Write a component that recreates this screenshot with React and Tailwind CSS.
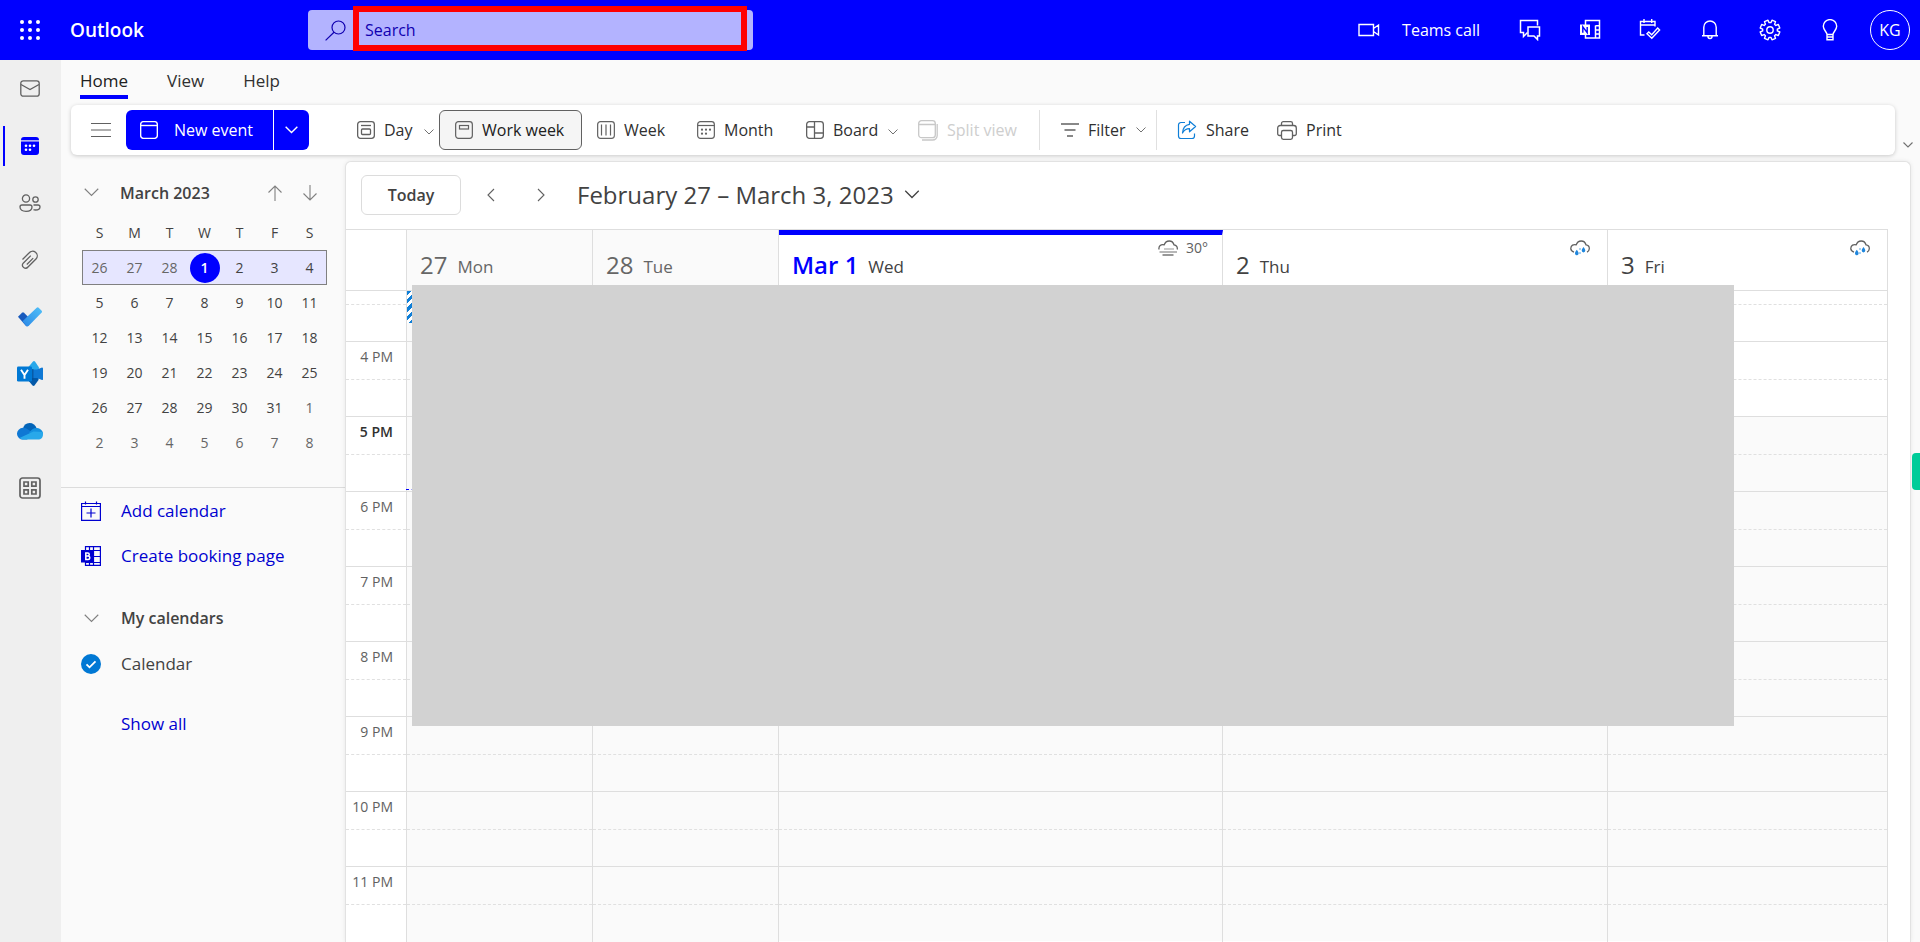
import React from 'react';

function Svg({ size = 20, children, className = '', w, h, sw = 1.1, vb }) {
  return (
    <svg
      width={w || size}
      height={h || size}
      viewBox={vb || `0 0 ${w || size} ${h || size}`}
      fill="none"
      stroke="currentColor"
      strokeWidth={sw}
      className={`shrink-0 ${className}`}
      aria-hidden="true"
    >
      {children}
    </svg>
  );
}

const Chevron = ({ w = 10, h = 6, sw = 1.1, className }) => (
  <Svg w={w} h={h} vb="0 0 10 6" sw={sw} className={className}>
    <path d="M.5.5 5 5 9.5.5" vectorEffect="non-scaling-stroke" />
  </Svg>
);

const Waffle = () => (
  <Svg size={20}>
    {[2, 10, 18].map((y) =>
      [2, 10, 18].map((x) => <circle key={`${x}-${y}`} cx={x} cy={y} r="2" fill="currentColor" stroke="none" />)
    )}
  </Svg>
);

const SearchIcon = () => (
  <Svg size={21} sw={1.2}>
    <circle cx="13.5" cy="7.5" r="6.5" />
    <path d="M9 12.2.6 20.4" />
  </Svg>
);

const Video = () => (
  <Svg w={22} h={14} sw={1.4}>
    <path d="M1 1.5h14.5v11H1zM15.5 5.5l5-3.5v10l-5-3.5" />
  </Svg>
);

const ChatIcon = () => (
  <Svg size={22} sw={1.5}>
    <path d="M18.5 6.5v-5H1.500v12h3v4l4-4" />
    <path d="M9 8h11.500v9H18.500v3.500L15 17H9z" />
  </Svg>
);

const OneNote = () => (
  <Svg size={22} sw={1.5}>
    <path d="M6.500 6V1.500h14v17.500h-14V16M16.500 6.500v12.500M16.500 6.800h4M16.500 11h4M16.500 15h4" />
    <path d="M1 5.500h10v10.500H1z" fill="currentColor" stroke="none" />
    <path d="M3.800 13.700V7.900l4.400 5.800V7.900" stroke="#0000ff" strokeWidth="1.400" />
  </Svg>
);

const CalCheck = () => (
  <Svg size={22} sw={1.4}>
    <path d="M5.500 16H1.500V2.500h14.500v5M1.500 6h14.500M5 0v4M12.700 0v4" />
    <path d="m8 14.800 1.800-1.800 2.900 2.700 6-6.700 1.900 1.900-7.800 8.400z" />
  </Svg>
);

const Bell = () => (
  <Svg size={22} sw={1.4}>
    <path d="M4.800 16.500V8.200a6.200 6.200 0 0 1 12.400 0v8.300M3 16.700h16M9 17.500a2 2 0 0 0 4 0" />
  </Svg>
);

const Gear = () => {
  const pts = [];
  for (let i = 0; i < 8; i += 1) {
    const a = (i * Math.PI) / 4 + Math.PI / 8;
    [[-0.27, 7.4], [-0.19, 10], [0.19, 10], [0.27, 7.4]].forEach(([d, r]) => {
      pts.push(`${(11 + r * Math.sin(a + d)).toFixed(2)},${(11 - r * Math.cos(a + d)).toFixed(2)}`);
    });
  }
  return (
    <Svg size={22} sw={1.4}>
      <polygon points={pts.join(' ')} strokeLinejoin="round" />
      <circle cx="11" cy="11" r="3.200" />
    </Svg>
  );
};

const Bulb = () => (
  <Svg size={22} sw={1.4}>
    <path d="M8 15.500c0-2.500-3.700-4.500-3.700-8.200a6.700 6.700 0 0 1 13.400 0c0 3.700-3.700 5.700-3.700 8.200zM8 15.500v5.300h6v-5.300M8 18h6" />
  </Svg>
);

const Mail = () => (
  <Svg w={20} h={17} sw={1.3}>
    <rect x=".8" y=".8" width="18.400" height="15.400" rx="2.500" />
    <path d="M1 4.500 10 9.500l9-5" />
  </Svg>
);

const CalendarFilled = () => (
  <Svg size={18} sw={0}>
    <path d="M0 3a3 3 0 0 1 3-3h12a3 3 0 0 1 3 3v.2H0zM0 4.600h18V15a3 3 0 0 1-3 3H3a3 3 0 0 1-3-3z" fill="currentColor" />
    <g fill="#fff">
      {[5, 9, 13].map((x) => <circle key={x} cx={x} cy="8.800" r="1.300" />)}
      {[5, 9].map((x) => <circle key={x} cx={x} cy="12.800" r="1.300" />)}
    </g>
  </Svg>
);

const People = () => (
  <Svg w={22} h={18} sw={1.3}>
    <circle cx="7" cy="4.500" r="3.600" />
    <circle cx="16.500" cy="5.500" r="2.700" />
    <path d="M3 11h8a2 2 0 0 1 2 2c0 3-2.500 4.300-6 4.300S1 16 1 13a2 2 0 0 1 2-2z" />
    <path d="M14.500 11h4.500a2 2 0 0 1 2 2c0 2-2 3-4.500 3-1 0-1.500-.100-2-.300" />
  </Svg>
);

const Clip = () => (
  <Svg w={18} h={20} sw={1.3}>
    <path d="M1.500 9.500 8 3a4.600 4.600 0 0 1 7.200 5.800L7 17a3 3 0 0 1-4.800-3.800L9.800 5.600M5.800 14.500l6.400-6.400" />
  </Svg>
);

const Todo = () => (
  <Svg w={24} h={20} sw={0}>
    <defs>
      <linearGradient id="todo" x1="0" y1="1" x2="1" y2="0">
        <stop offset="0" stopColor="#2b88e6" />
        <stop offset="1" stopColor="#50c0f8" />
      </linearGradient>
    </defs>
    <path d="m0 9.700 4-4q1-.7 2 0l8 8-4 5.300q-1 .7-2 0z" fill="#185abd" />
    <path d="M4.500 14.200 18.700.700q1-.7 2 0l3 3q.6 1 0 1.800L10.500 19q-1.300.7-2.300 0z" fill="url(#todo)" />
  </Svg>
);

const Viva = () => (
  <Svg w={26} h={26} sw={0}>
    <path d="M11 6.500 16 .500q1-.8 2 0l4 6-1 7H11z" fill="#28a8ea" />
    <path d="M12 13h10l-.5 6-4 5.500q-1 .8-2 0L11 19z" fill="#0358a7" />
    <path d="M14 8.500h6l5-2q1 .2 1 1v11q-.5.7-1 .5l-5-2h-6z" fill="#0f78d4" />
    <path d="M12 8h4.500v10.500L12 21z" fill="#064f94" opacity=".7" />
    <rect x="0" y="5.500" width="15" height="15" rx="1.200" fill="#0078d4" />
    <path d="M4 8.800 7.500 14 11 8.800M7.500 13.500v4.200" stroke="#fff" strokeWidth="1.900" />
  </Svg>
);

const OneDrive = () => (
  <Svg w={26} h={18} sw={0}>
    <path d="M6 6.500A7 7 0 0 1 12.500 1c3.500 0 6 2 7 5l-5 6z" fill="#0364b8" />
    <path d="M6 17.500A5.800 5.800 0 0 1 0 12a6 6 0 0 1 6-6.200c2-.1 3.500.7 5 1.700l7 4.500-8 5.500z" fill="#0f78d4" />
    <path d="M12 11c2-3.500 5-5.300 8-5 4 .5 6 3.200 6 6l-9 2z" fill="#1490df" />
    <path d="M2.500 16c1 .9 2 1.500 3.500 1.500h15c3 0 5-2 5-5 0-1-.2-1.800-.6-2.500L16.500 9.500z" fill="#28a8ea" />
  </Svg>
);

const Apps = () => (
  <Svg size={22} sw={1.7}>
    <rect x="1" y="1" width="20" height="20" rx="2.500" />
    <path d="M5 5h4.200v4.200H5zM12.800 5H17v4.200h-4.200zM5 12.800h4.200V17H5zM12.800 12.800H17V17h-4.200z" />
  </Svg>
);

const Frame = () => <rect x=".65" y=".65" width="16.700" height="16.700" rx="2.800" />;

const EventIcon = () => <Svg size={18} sw={1.4}><Frame /><path d="M.7 4.500h16.600" /></Svg>;
const DayIcon = () => <Svg size={18} sw={1.3}><Frame /><path d="M4 4.500h10" /><rect x="4.500" y="8" width="9" height="5.500" rx="1" /></Svg>;
const WorkWeekIcon = () => <Svg size={18} sw={1.2}><Frame /><rect x="4.500" y="4.500" width="9" height="3.500" /></Svg>;
const WeekIcon = () => <Svg size={18} sw={1.2}><Frame /><path d="M4.500 3.500v11M9 3.500v11M13.500 3.500v11" /></Svg>;
const MonthIcon = () => (
  <Svg size={18} sw={1.2}>
    <Frame />
    <path d="M.7 4.500h16.600" />
    <g fill="currentColor" stroke="none">
      {[5, 9, 13].map((x) => <circle key={x} cx={x} cy="8.700" r="1.100" />)}
      {[5, 9].map((x) => <circle key={x} cx={x} cy="12.700" r="1.100" />)}
    </g>
  </Svg>
);
const BoardIcon = () => <Svg size={18} sw={1.3}><Frame /><path d="M8.500.7v16.600M.7 6h7.800M8.500 12h8.800" /></Svg>;
const SplitIcon = () => (
  <Svg w={20} h={21} sw={1.3}>
    <rect x=".7" y=".7" width="16.600" height="17" rx="2.800" />
    <path d="M.7 4.500h16.600M19.200 4v11.500a4.500 4.500 0 0 1-4.500 4.500H4" />
  </Svg>
);
const FilterIcon = () => <Svg w={18} h={14} sw={1.3}><path d="M0 1h18M3.500 7h11M6 13h6" /></Svg>;
const ShareIcon = () => (
  <Svg size={20} sw={1.2}>
    <path d="M8 2.500H4A2.500 2.500 0 0 0 1.500 5v11A2.500 2.500 0 0 0 4 18.500h11a2.500 2.500 0 0 0 2.500-2.500v-2.500" />
    <path d="M12.500 1.200 18.600 6.500l-6.100 5.300V8.600c-3.500 0-5.500 1.400-7 4.400.3-4.800 2.600-8.200 7-8.700z" strokeLinejoin="round" />
  </Svg>
);
const PrintIcon = () => (
  <Svg w={20} h={19} sw={1.3}>
    <path d="M4.500 4.500V2.500A1.800 1.800 0 0 1 6.300.7h7.400a1.800 1.800 0 0 1 1.800 1.800v2M4.500 14.500h-2A1.800 1.800 0 0 1 .7 12.700V7a2.500 2.500 0 0 1 2.500-2.500h13.600A2.500 2.500 0 0 1 19.300 7v5.700a1.800 1.800 0 0 1-1.800 1.800h-2" />
    <rect x="4.500" y="9.500" width="11" height="8.800" rx="1.800" />
  </Svg>
);
const AddCal = () => (
  <Svg size={20} sw={1.2}>
    <path d="M.6 2.500h18.800v16.900H.6zM.6 5.500h18.800M4.500.5v3M15.500.5v3M10 7.500v9M5.500 12h9" />
  </Svg>
);
const Booking = () => (
  <Svg size={20} sw={1.2}>
    <path d="M4.500.6h14.900v18.800H4.500zM8.500.6v4M12.500.6v18.800M8.500 15.500v4M4.500 4.500h14.900M12 10.500h7.400M4.500 16.500h14.900" />
    <path d="M0 4h12.500v12.500H0z" fill="currentColor" stroke="none" />
    <path d="M4.800 6.900h1.900a1.500 1.500 0 0 1 0 3.100H4.800h2.200a1.700 1.700 0 0 1 0 3.500H4.800z" stroke="#fff" strokeWidth="1.500" />
  </Svg>
);
const CheckCircle = () => (
  <Svg size={20} sw={1.8}>
    <circle cx="10" cy="10" r="10" fill="#0078d4" stroke="none" />
    <path d="m5.500 10.300 3 3 6-6" stroke="#fff" />
  </Svg>
);
const Arrow = ({ down }) => (
  <Svg w={14} h={16} sw={1.1}>
    {down ? <path d="M7 0v15M.5 8.500 7 15l6.500-6.500" /> : <path d="M7 16V1M.5 7.500 7 1l6.500 6.500" />}
  </Svg>
);
const SideChevron = ({ left }) => (
  <Svg w={8} h={14} sw={1.1}>{left ? <path d="M7 1 1 7l6 6" /> : <path d="m1 1 6 6-6 6" />}</Svg>
);

const FogCloud = () => (
  <Svg w={20} h={16} sw={1.3}>
    <path d="M1 9.500C.4 6 3 4 6.200 4.800 8-.3 14.500-.3 16 4.800c2.500.3 3.700 2.200 3.200 4.700" />
    <path d="M6 9h10" opacity=".5" />
    <path d="M1.500 12h17.500" opacity=".7" />
    <path d="M4.500 15h11" />
  </Svg>
);
const RainCloud = () => (
  <Svg w={20} h={16} sw={1.3}>
    <path d="M4 12.200C1.800 11.500.7 10 .8 8.300 1 5.300 3.500 4 6.200 4.800 8-.3 14.500-.3 16 4.800c2.300.3 3.400 2 3.300 4-.1 1.700-.9 2.800-2.300 3.400" />
    <g fill="#1f86dc" stroke="none">
      <path d="M6.800 9.800c1.100 1.700 1.800 2.400 1.800 3.600a1.800 1.800 0 0 1-3.600 0c0-1.200.7-1.900 1.800-3.600zM13.500 7c1.100 1.700 1.800 2.400 1.800 3.600a1.800 1.800 0 0 1-3.600 0c0-1.200.7-1.900 1.800-3.600z" />
      <circle cx="10" cy="9" r="1" opacity=".5" />
      <circle cx="10" cy="13" r="1" opacity=".5" />
    </g>
  </Svg>
);

const headerIcons = [
  ['Chat', ChatIcon],
  ['OneNote feed', OneNote],
  ['My day', CalCheck],
  ['Notifications', Bell],
  ['Settings', Gear],
  ['Tips', Bulb],
];

function Header() {
  return (
    <header className="flex h-[60px] shrink-0 items-center bg-[#0000ff] text-white">
      <button className="flex w-[60px] justify-center" aria-label="App launcher"><Waffle /></button>
      <div className="w-[248px] pl-[10px] text-[19px] font-semibold">Outlook</div>
      <label className="relative flex h-10 w-[445px] items-center rounded bg-[#b3b3ff] pl-[17px] text-[#1000b0]">
        <SearchIcon />
        <input
          aria-label="Search"
          placeholder="Search"
          className="ml-[19px] min-w-0 flex-1 bg-transparent text-base outline-none placeholder:text-[#1000b0]"
        />
        <span className="pointer-events-none absolute -top-1 right-[6px] -bottom-px left-[45px] border-[6px] border-[#ff0000]" />
      </label>
      <div className="ml-auto flex items-center pr-[10px]">
        <button className="mr-5 flex items-center gap-[22px] whitespace-nowrap"><Video />Teams call</button>
        {headerIcons.map(([name, Icon]) => (
          <button key={name} aria-label={name} className="flex h-10 w-[60px] items-center justify-center"><Icon /></button>
        ))}
        <button className="ml-[10px] flex size-10 items-center justify-center rounded-full border border-white text-base" aria-label="Account">KG</button>
      </div>
    </header>
  );
}

const railItems = [
  ['Mail', Mail],
  ['Calendar', CalendarFilled],
  ['People', People],
  ['Files', Clip],
  ['To Do', Todo],
  ['Viva Engage', Viva],
  ['OneDrive', OneDrive],
  ['More apps', Apps],
];

function Rail() {
  return (
    <nav className="flex w-[61px] shrink-0 flex-col bg-[#efefef] text-[#616161]">
      {railItems.map(([name, Icon]) => (
        <button
          key={name}
          aria-label={name}
          className={`relative flex h-[57px] w-[60px] items-center justify-center ${name === 'Calendar' ? 'text-[#0000ff]' : ''}`}
        >
          {name === 'Calendar' && <span className="absolute left-[3px] h-10 w-[2px] bg-[#0000ff]" />}
          <Icon />
        </button>
      ))}
    </nav>
  );
}

const toolClass = 'flex h-10 items-center gap-[9px] whitespace-nowrap [&>svg]:text-[#616161] disabled:[&>svg]:text-[#c8c8c8]';

function Toolbar() {
  return (
    <div className="flex">
      <div className="ml-[10px] flex h-[50px] flex-1 items-center rounded-md bg-white pl-5 text-[#303030] shadow-[0_1px_4px_rgba(0,0,0,0.2)]">
        <button aria-label="Toggle navigation" className="mr-[15px] text-[#616161]">
          <Svg w={20} h={16} sw={1.2}><path d="M0 1.500h20M0 8h20M0 14.500h20" /></Svg>
        </button>
        <div className="mr-12 flex gap-px text-white">
          <button className="flex h-10 w-[147px] items-center gap-4 rounded-l-md bg-[#0000ff] pl-[14px] font-medium whitespace-nowrap"><EventIcon />New event</button>
          <button aria-label="More new options" className="flex w-[35px] items-center justify-center rounded-r-md bg-[#0000ff]"><Chevron w={13} h={8} sw={1.4} /></button>
        </div>
        <button className={`${toolClass} w-[82px]`}><DayIcon />Day<Chevron sw={0.9} className="mt-1 ml-auto mr-[5px]" /></button>
        <button className={`${toolClass} w-[143px] rounded-md border border-[#616161] bg-[#f5f5f5] pl-[15px] text-[#202020]`}><WorkWeekIcon />Work week</button>
        <button className={`${toolClass} ml-[15px] w-[100px]`}><WeekIcon />Week</button>
        <button className={`${toolClass} w-[109px]`}><MonthIcon />Month</button>
        <button className={`${toolClass} w-[112px]`}><BoardIcon />Board<Chevron sw={0.9} className="mt-1 ml-auto mr-5" /></button>
        <button disabled className={`${toolClass} w-[122px] border-r border-[#e0e0e0] text-[#cecece]`}><SplitIcon />Split view</button>
        <button className={`${toolClass} w-[117px] border-r border-[#e0e0e0] pl-[21px]`}><FilterIcon />Filter<Chevron sw={0.9} className="ml-auto mr-[10px]" /></button>
        <button className={`${toolClass} ml-5 w-[100px]`}><span className="text-[#0f7fd8]"><ShareIcon /></span>Share</button>
        <button className={toolClass}><PrintIcon />Print</button>
      </div>
      <button aria-label="Ribbon options" className="flex w-[25px] items-end justify-center pb-[7px] text-[#707070]"><Chevron /></button>
    </div>
  );
}

const weeks = [
  [26, 27, 28, 1, 2, 3, 4],
  [5, 6, 7, 8, 9, 10, 11],
  [12, 13, 14, 15, 16, 17, 18],
  [19, 20, 21, 22, 23, 24, 25],
  [26, 27, 28, 29, 30, 31, 1],
  [2, 3, 4, 5, 6, 7, 8],
];

function Sidebar() {
  return (
    <aside className="w-[284px] shrink-0 text-[#424242]">
      <div className="border-b border-[#dcdcdc] pb-[27px]">
        <div className="flex h-[60px] items-center pt-[15px] pl-[22px] text-[#808080]">
          <Chevron w={17} h={9} />
          <h2 className="ml-5 w-[148px] font-semibold text-[#424242]">March 2023</h2>
          <button aria-label="Previous month" className="mr-[21px]"><Arrow /></button>
          <button aria-label="Next month"><Arrow down /></button>
        </div>
        <table className="ml-[21px] w-[245px] table-fixed border-collapse text-center text-sm">
          <thead>
            <tr className="h-[35px]">
              {['S', 'M', 'T', 'W', 'T', 'F', 'S'].map((d, i) => <th key={i} className="p-0 font-[380]">{d}</th>)}
            </tr>
          </thead>
          <tbody>
            {weeks.map((week, w) => (
              <tr key={w} className={`h-[35px] ${w === 0 ? 'bg-[#e6e6ff] outline outline-1 -outline-offset-1 outline-[#808080]' : ''}`}>
                {week.map((d, i) => (
                  <td key={i} className={`p-0 ${(w === 0 && i < 3) || w === 5 || (w === 4 && i === 6) ? 'text-[#666666]' : ''}`}>
                    {w === 0 && d === 1 ? (
                      <span className="mx-auto flex size-[30px] items-center justify-center rounded-full bg-[#0000ff] font-semibold text-white">1</span>
                    ) : d}
                  </td>
                ))}
              </tr>
            ))}
          </tbody>
        </table>
      </div>
      <div className="text-[17px] text-[#0000d0]">
        <button className="flex h-[46px] items-center gap-5 pl-5"><AddCal />Add calendar</button>
        <button className="flex h-11 items-center gap-5 pl-5"><Booking />Create booking page</button>
      </div>
      <button className="mt-[17px] flex h-[46px] items-center gap-[21px] pl-[22px] font-semibold"><span className="text-[#808080]"><Chevron w={17} h={9} /></span>My calendars</button>
      <label className="flex h-[46px] w-fit items-center gap-5 pl-5 text-[17px]">
        <input type="checkbox" defaultChecked className="sr-only" />
        <CheckCircle />
        Calendar
      </label>
      <button className="mt-[14px] flex h-[46px] items-center pl-[60px] text-[17px] text-[#0000d0]">Show all</button>
    </aside>
  );
}

const days = [
  { num: '27', name: 'Mon', past: true },
  { num: '28', name: 'Tue', past: true },
  { num: 'Mar 1', name: 'Wed', today: true, weather: <><FogCloud />30°</> },
  { num: '2', name: 'Thu', weather: <RainCloud /> },
  { num: '3', name: 'Fri', weather: <RainCloud /> },
];
const cols = 'grid grid-cols-[61px_186fr_186fr_444fr_385fr_280fr]';
const hours = ['', '4 PM', '5 PM', '6 PM', '7 PM', '8 PM', '9 PM', '10 PM', '11 PM'];

function Column({ past, labels }) {
  return (
    <div className={`border-r border-[#dedede] ${past ? 'bg-[#fafafa]' : ''}`}>
      {hours.map((h, i) => (
        <div key={i} className={`border-b border-[#dedede] last:border-b-0 ${!labels && i > 1 ? 'bg-[#fafafa]' : ''}`}>
          <div className={`border-b border-dashed border-[#e0e0e0] ${i === 0 ? 'h-[14px]' : 'h-[38px]'} ${h === '5 PM' ? 'font-semibold text-[#303030]' : 'text-[#616161]'} pt-[3px] pr-[13px] text-right text-sm leading-6 whitespace-nowrap`}>
            {labels ? h : ''}
          </div>
          <div className="h-9" />
        </div>
      ))}
    </div>
  );
}

function Planner() {
  return (
    <main className="relative mt-[6px] mr-[9px] flex min-w-0 flex-1 flex-col rounded-t-md border border-b-0 border-[#e2e2e2] bg-white shadow-[0_0_4px_rgba(0,0,0,0.08)]">
      <div className="flex h-[67px] shrink-0 items-center pb-[2px] pl-[15px] text-[#424242]">
        <button className="h-10 w-[100px] rounded-md border border-[#dcdcdc] font-semibold">Today</button>
        <button aria-label="Previous week" className="flex w-[60px] justify-center text-[#616161]"><SideChevron left /></button>
        <button aria-label="Next week" className="flex w-10 justify-center text-[#616161]"><SideChevron /></button>
        <button className="ml-4 flex items-center gap-[10px] text-2xl whitespace-nowrap">February 27 – March 3, 2023<Chevron w={16} h={9} sw={1.3} /></button>
      </div>
      <div className="relative flex min-h-0 flex-1 flex-col overflow-hidden pr-[22px]">
        <div className={`${cols} h-[62px] shrink-0 border-y border-[#dedede]`}>
          <div className="border-r border-[#dedede]" />
          {days.map((d) => (
            <div
              key={d.num}
              className={`relative flex items-end gap-[10px] border-r border-[#dedede] pb-[9px] pl-[13px] ${d.past ? 'bg-[#fafafa] text-[#666666]' : 'text-[#424242]'} ${d.today ? 'border-t-[5px] border-t-[#0000ff]' : ''}`}
            >
              <span className={`text-2xl leading-8 ${d.today ? 'font-semibold text-[#0000ff]' : ''}`}>{d.num}</span>
              <span className="text-[17px] leading-7">{d.name}</span>
              {d.weather && (
                <span className={`absolute flex h-4 items-center gap-2 text-sm text-[#616161] ${d.today ? 'top-[5px] right-[14px]' : 'top-[10px] right-[17px]'}`}>{d.weather}</span>
              )}
            </div>
          ))}
        </div>
        <div className={`${cols} min-h-0 flex-1 overflow-hidden`}>
          <Column labels />
          {days.map((d) => <Column key={d.num} past={d.past} />)}
        </div>
        <div className="absolute top-[62px] left-[61px] h-8 w-5 bg-[repeating-linear-gradient(135deg,#0f7fd8_0_3px,#ffffff_3px_6px)]" />
        <div className="absolute top-[260px] left-[60px] w-5 border-t border-dashed border-[#0000ff]" />
        <div className="absolute top-[56px] right-[176px] left-[66px] h-[441px] bg-[#d2d2d2]" />
      </div>
    </main>
  );
}

export default function App() {
  return (
    <div className="relative flex h-screen flex-col overflow-hidden bg-[#fafafa] font-['Open_Sans','Noto_Sans',sans-serif] text-base leading-6 font-[380]">
      <Header />
      <div className="flex min-h-0 flex-1">
        <Rail />
        <div className="flex min-w-0 flex-1 flex-col">
          <div className="flex h-[45px] shrink-0 items-start gap-[39px] pt-2 pl-[19px] text-[17px] text-[#303030]">
            <button className="border-b-4 border-[#0000ff] pt-px pb-[2px] font-medium text-[#202020]">Home</button>
            <button className="pt-px">View</button>
            <button className="pt-px">Help</button>
          </div>
          <Toolbar />
          <div className="flex min-h-0 flex-1">
            <Sidebar />
            <Planner />
          </div>
        </div>
      </div>
      <button aria-label="Open side panel" className="absolute top-[453px] right-0 h-[37px] w-2 rounded-l bg-[#00cc99]" />
    </div>
  );
}
